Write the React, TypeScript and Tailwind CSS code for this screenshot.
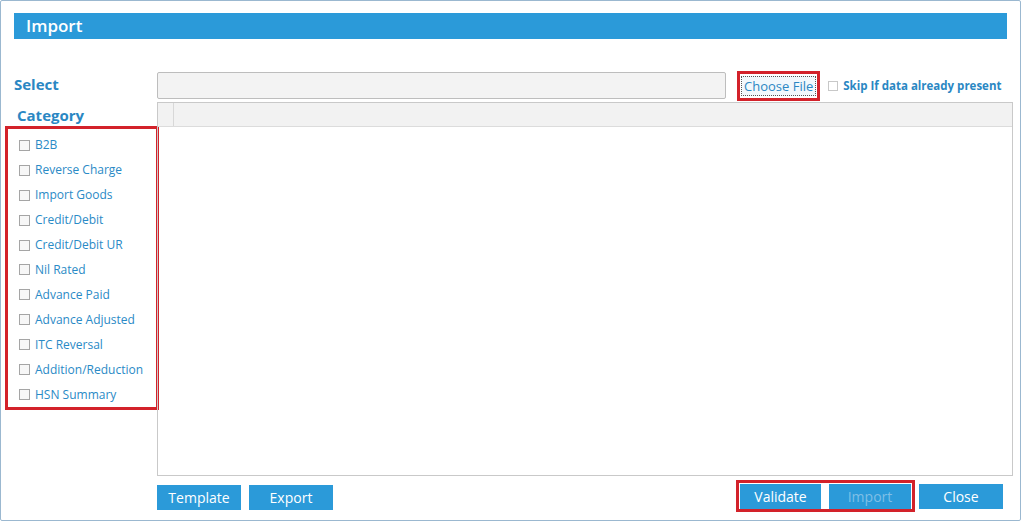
import React from "react";

const items = ["B2B","Reverse Charge","Import Goods","Credit/Debit","Credit/Debit UR","Nil Rated","Advance Paid","Advance Adjusted","ITC Reversal","Addition/Reduction","HSN Summary"];

export default function App() {
  return (
    <div className="w-[1024px] h-[523px] bg-white overflow-hidden" style={{fontFamily: '"Open Sans", "Noto Sans", sans-serif'}}>
      <div className="w-[1021px] h-[521px] border border-[#9bb8d0] rounded-[2px] flex flex-col pt-[12px]">
        <div className="mx-[13px] h-[26px] bg-[#2b9ad9] flex items-center pl-[12px] text-white text-[17px] font-semibold">Import</div>
        <div className="flex flex-1 mt-[32px]">
          <div className="w-[156px] flex flex-col">
            <div className="pl-[13px] mt-[3px] text-[15px] font-bold text-[#2a87c3] leading-[20px]">Select</div>
            <div className="pl-[16px] mt-[11px] text-[15px] font-bold text-[#2a87c3] leading-[20px]">Category</div>
            <div className="ml-[4px] mt-[1px] w-[154px] h-[284px] border-[3px] border-[#d3222a] flex flex-col pt-[4px] pl-[11px]">
              {items.map(t => (
                <div key={t} className="h-[25.2px] flex items-center gap-[5px] text-[12px] text-[#2a8ac6]">
                  <span className="w-[11px] h-[11px] border border-[#a5a5a5] bg-[#f7f7f7]" />
                  {t}
                </div>
              ))}
            </div>
          </div>
          <div className="flex-1 flex flex-col pr-[9px]">
            <div className="flex items-center h-[29px]">
              <div className="w-[569px] h-[27px] border border-[#bdbdbd] bg-[#f3f3f3] rounded-[2px]" />
              <div className="ml-[11px] border-[3px] border-[#d3222a] h-[30px] flex items-center px-[1px]">
                <div className="border border-dotted border-[#555] bg-[#f2f8fc] text-[#2a87c3] text-[13px] px-[2px] leading-[18px]">Choose File</div>
              </div>
              <span className="ml-[8px] w-[10px] h-[10px] border border-[#c8c8c8]" />
              <span className="ml-[5px] text-[11.5px] font-bold text-[#2a87c3] whitespace-nowrap">Skip If data already present</span>
            </div>
            <div className="mt-[2px] w-[856px] h-[374px] border border-[#c9c9c9] flex flex-col">
              <div className="h-[24px] bg-[#f2f2f2] border-b border-[#dcdcdc] flex">
                <div className="w-[16px] border-r border-[#d8d8d8]" />
              </div>
            </div>
            <div className="flex items-center mt-[4px]">
              <button className="w-[84px] h-[25px] bg-[#2b9ad9] text-white text-[14px] mt-[3px]">Template</button>
              <button className="ml-[8px] w-[84px] h-[25px] bg-[#2b9ad9] text-white text-[14px] mt-[3px]">Export</button>
              <div className="ml-auto border-[3px] border-[#d3222a] h-[32px] flex items-center gap-[8px] px-[1px] mr-[4px]">
                <button className="w-[81px] h-[25px] bg-[#2b9ad9] text-white text-[14px]">Validate</button>
                <button className="w-[82px] h-[25px] bg-[#2b9ad9] text-[#7fbfe6] text-[14px]">Import</button>
              </div>
              <button className="w-[84px] h-[25px] bg-[#2b9ad9] text-white text-[14px] mr-[10px]">Close</button>
            </div>
          </div>
        </div>
      </div>
    </div>
  );
}
